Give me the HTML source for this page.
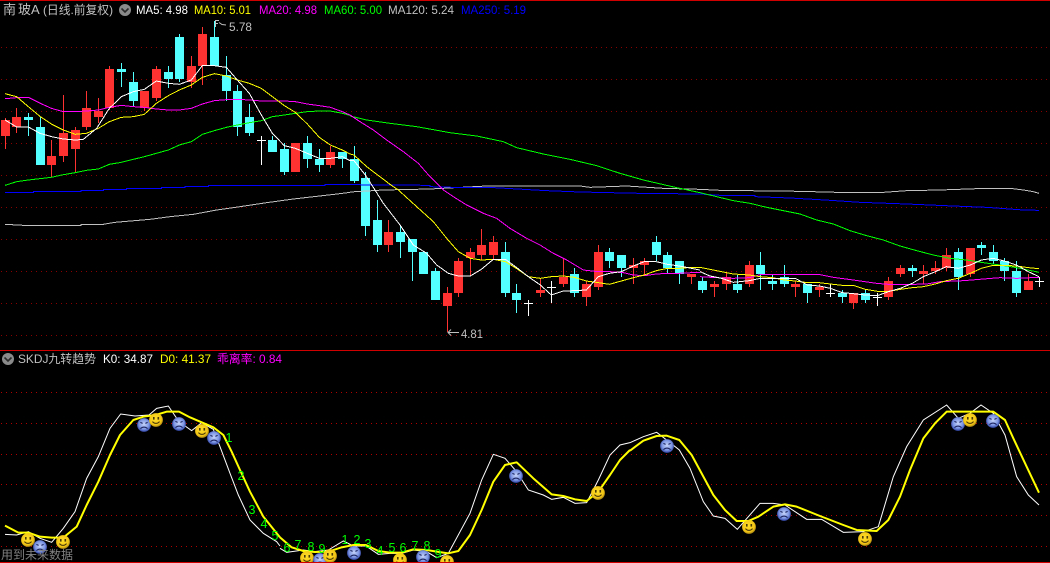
<!DOCTYPE html>
<html><head><meta charset="utf-8"><style>
html,body{margin:0;padding:0;background:#000;width:1050px;height:563px;overflow:hidden}
svg{display:block}
text{font-family:"Liberation Sans","Noto Sans CJK SC",sans-serif;font-size:12px}
.n{fill:#00ff00;font-size:12.5px}
</style></head><body>
<svg width="1050" height="563" viewBox="0 0 1050 563" xmlns="http://www.w3.org/2000/svg">
<defs>
<radialGradient id="gy" cx="45%" cy="40%" r="60%"><stop offset="0" stop-color="#ffe02a"/><stop offset=".75" stop-color="#f2c415"/><stop offset="1" stop-color="#a88412"/></radialGradient>
<radialGradient id="gb" cx="50%" cy="45%" r="55%"><stop offset="0" stop-color="#c4d2f8"/><stop offset=".65" stop-color="#7d96e4"/><stop offset="1" stop-color="#2c3f9e"/></radialGradient>
<symbol id="sm" viewBox="-7 -7 14 14" overflow="visible"><circle r="6.9" fill="url(#gy)"/><rect x="-3" y="-3" width="1.6" height="2.6" fill="#4a3a08"/><rect x="1.5" y="-3" width="1.6" height="2.6" fill="#4a3a08"/><path d="M-3.6 1.6Q0 5.2 3.6 1.6" fill="none" stroke="#4a3a08" stroke-width="1"/></symbol>
<symbol id="fr" viewBox="-7 -7 14 14" overflow="visible"><circle r="6.9" fill="url(#gb)"/><path d="M-3.6-2.6l2.2 1M3.6-2.6l-2.2 1" stroke="#1c2560" stroke-width="1.1" fill="none"/><path d="M-3.6 3.6Q0 .6 3.6 3.6" fill="none" stroke="#1c2560" stroke-width="1.1"/></symbol>
</defs>
<rect width="1050" height="563" fill="#000"/>

<!-- grid -->
<g stroke-width="1" stroke-dasharray="1 4" shape-rendering="crispEdges">
<path stroke="#8a0000" d="M1 47.5H1050M1 79.5H1050M1 111.5H1050M1 143.5H1050M1 175.5H1050M1 207.5H1050M1 239.5H1050M1 271.5H1050M1 303.5H1050M1 335.5H1050"/>
<path stroke="#b00000" d="M1 392.5H1050M1 423.5H1050M1 454.5H1050M1 484.5H1050M1 515.5H1050M1 546.5H1050"/>
</g>

<!-- red candles -->
<path shape-rendering="crispEdges" fill="#ff3232" d="M1 120h9V136h-9zM5 118h1V149h-1zM12 117h9V127h-9zM16 108h1V133h-1zM47 156h9V165h-9zM51 140h1V177h-1zM59 133h9V156h-9zM63 95h1V162h-1zM71 130h9V149h-9zM75 127h1V172h-1zM82 108h9V127h-9zM86 91h1V130h-1zM94 111h9V117h-9zM98 98h1V123h-1zM105 69h9V108h-9zM109 66h1V110h-1zM140 91h9V108h-9zM144 91h1V111h-1zM152 69h9V98h-9zM156 66h1V101h-1zM187 66h9V82h-9zM191 56h1V88h-1zM198 34h9V66h-9zM202 27h1V85h-1zM291 143h9V172h-9zM326 152h9V165h-9zM330 146h1V168h-1zM384 232h9V245h-9zM388 220h1V252h-1zM443 293h9V306h-9zM447 287h1V332h-1zM454 261h9V293h-9zM458 258h1V297h-1zM466 252h9V258h-9zM470 248h1V276h-1zM477 245h9V255h-9zM481 229h1V260h-1zM489 242h9V255h-9zM493 236h1V260h-1zM536 290h9V293h-9zM540 278h1V297h-1zM559 277h9V284h-9zM563 258h1V287h-1zM582 284h9V297h-9zM586 281h1V306h-1zM594 252h9V287h-9zM598 245h1V290h-1zM629 265h9V268h-9zM633 258h1V284h-1zM640 261h9V265h-9zM644 258h1V275h-1zM687 274h9V277h-9zM691 274h1V284h-1zM710 284h9V287h-9zM714 281h1V297h-1zM722 277h9V284h-9zM726 272h1V290h-1zM745 265h9V284h-9zM749 261h1V287h-1zM791 284h9V287h-9zM795 281h1V297h-1zM815 287h9V290h-9zM819 284h1V297h-1zM849 293h9V303h-9zM853 293h1V309h-1zM884 281h9V297h-9zM888 277h1V300h-1zM896 268h9V274h-9zM900 265h1V277h-1zM919 271h9V274h-9zM923 265h1V284h-1zM931 268h9V271h-9zM935 261h1V274h-1zM942 255h9V268h-9zM946 248h1V271h-1zM966 248h9V274h-9zM970 248h1V277h-1zM1024 281h9V290h-9zM1028 274h1V290h-1z"/>
<!-- cyan candles -->
<path shape-rendering="crispEdges" fill="#54ffff" d="M24 117h9V120h-9zM28 113h1V136h-1zM36 127h9V165h-9zM40 117h1V165h-1zM117 69h9V72h-9zM121 63h1V87h-1zM129 82h9V101h-9zM133 72h1V107h-1zM164 72h9V79h-9zM168 66h1V88h-1zM175 37h9V79h-9zM179 34h1V82h-1zM210 37h9V66h-9zM214 21h1V66h-1zM222 75h9V91h-9zM226 56h1V101h-1zM233 91h9V127h-9zM237 85h1V136h-1zM245 117h9V133h-9zM249 104h1V136h-1zM268 140h9V152h-9zM272 136h1V152h-1zM280 149h9V172h-9zM284 143h1V175h-1zM303 143h9V159h-9zM307 136h1V168h-1zM315 159h9V165h-9zM319 149h1V172h-1zM338 152h9V159h-9zM342 152h1V168h-1zM350 159h9V181h-9zM354 146h1V183h-1zM361 178h9V226h-9zM365 172h1V236h-1zM373 220h9V245h-9zM377 200h1V252h-1zM396 232h9V242h-9zM400 225h1V258h-1zM408 239h9V252h-9zM412 239h1V281h-1zM419 252h9V274h-9zM431 271h9V300h-9zM435 268h1V300h-1zM501 252h9V293h-9zM505 242h1V297h-1zM512 293h9V300h-9zM516 284h1V313h-1zM570 274h9V293h-9zM574 268h1V297h-1zM605 252h9V261h-9zM609 248h1V268h-1zM617 255h9V268h-9zM621 255h1V277h-1zM652 242h9V255h-9zM656 236h1V261h-1zM663 255h9V268h-9zM667 252h1V273h-1zM675 261h9V274h-9zM679 261h1V284h-1zM698 281h9V290h-9zM702 277h1V293h-1zM733 284h9V290h-9zM737 275h1V293h-1zM756 265h9V274h-9zM760 252h1V290h-1zM768 281h9V284h-9zM772 275h1V290h-1zM780 277h9V284h-9zM784 265h1V287h-1zM803 284h9V293h-9zM807 284h1V303h-1zM838 293h9V297h-9zM842 290h1V303h-1zM861 293h9V300h-9zM865 290h1V303h-1zM908 268h9V271h-9zM912 265h1V277h-1zM954 252h9V277h-9zM958 248h1V290h-1zM977 245h9V248h-9zM981 242h1V255h-1zM989 252h9V261h-9zM993 245h1V264h-1zM1000 261h9V271h-9zM1004 258h1V281h-1zM1012 271h9V293h-9zM1016 261h1V297h-1z"/>
<!-- doji -->
<path shape-rendering="crispEdges" fill="#fff" d="M257 140h9v1h-9zM261 136h1V165h-1zM524 303h9v1h-9zM528 300h1V316h-1zM547 287h9v1h-9zM551 281h1V303h-1zM826 293h9v1h-9zM830 284h1V297h-1zM873 297h9v1h-9zM877 293h1V306h-1zM1035 281h9v1h-9zM1039 277h1V287h-1z"/>

<!-- MA250 & MA120 -->
<g fill="none" stroke-width="1" shape-rendering="crispEdges" stroke-linejoin="miter">
<g stroke="#c0c0c0">
<polyline transform="translate(0,180) scale(.33333)" stroke-width="3" points="15,133 70,136 243,136 243,133 310,133 345,127 380,124 450,118 510,110 580,103 650,90 720,80 800,68 880,57 950,49 1020,41 1050,37"/>
<polyline transform="translate(350,180) scale(.33333)" stroke-width="3" points="0,36 100,30 240,27 410,18 690,18 720,22 830,18 940,25 1050,28"/>
<polyline transform="translate(700,180) scale(.33333)" stroke-width="3" points="0,28 60,31 300,34 410,37 550,37 620,32 720,30 830,26 930,25 970,30 1000,35 1017,40"/>
</g>
<g stroke="#0000ff">
<polyline transform="translate(0,180) scale(.33333)" stroke-width="3" points="15,37 100,37 100,34 243,34 243,31 310,31 310,28 380,28 380,25 485,25 485,22 555,22 555,19 625,19 625,16 975,16 975,13 1050,13"/>
<polyline transform="translate(350,180) scale(.33333)" stroke-width="3" points="0,14 240,16 240,20 310,22 415,22 520,28 590,32 690,36 870,40 1050,42"/>
<polyline transform="translate(700,180) scale(.33333)" stroke-width="3" points="0,42 60,46 165,47 165,50 270,54 375,60 480,67 620,72 760,78 860,82 970,90 1017,91"/>
</g>
<!-- MA60 -->
<g stroke="#00ff00">
<polyline transform="scale(.33333)" stroke-width="3" points="15,556 50,545 85,540 154,532 190,524 226,518 259,511 295,507 328,493 364,487 400,478 433,470 469,460 505,450 538,435 574,425 607,403 643,392 679,382 712,375 748,368 784,362 817,350 853,345 886,340 922,335 958,333 991,333 1027,340 1050,346"/>
<polyline transform="translate(350,0) scale(.33333)" stroke-width="3" points="0,348 50,360 120,370 200,380 300,398 380,408 460,425 500,443 580,462 660,478 740,497 810,520 880,540 980,563 1050,578"/>
<polyline transform="translate(700,180) scale(.33333)" stroke-width="3" points="0,38 50,50 100,62 150,70 200,82 250,92 300,102 350,120 400,132 450,152 500,167 550,180 600,198 650,212 700,225 750,235 800,240 850,248 900,255 950,263 1017,277"/>
</g>
<!-- MA20 -->
<g stroke="#ff00ff">
<polyline transform="scale(.33333)" stroke-width="3" points="15,296 50,293 85,292 121,310 154,325 190,335 226,335 259,333 295,330 328,322 364,316 400,320 433,322 469,327 505,330 538,330 574,325 607,312 643,302 679,299 712,298 748,300 784,303 817,303 853,303 886,305 922,312 958,317 991,322 1027,335 1050,345"/>
<polyline transform="translate(350,0) scale(.33333)" stroke-width="3" points="0,345 30,365 70,390 110,420 160,455 205,490 240,530 280,570"/>
<polyline transform="translate(350,180) scale(.33333)" stroke-width="3" points="280,30 310,50 350,75 400,100 440,115 480,145 530,175 570,195 610,220 650,240 700,270 745,275 780,275 820,278 850,285 883,287 919,282 952,280 988,280 1024,278 1050,278"/>
<polyline transform="translate(700,180) scale(.33333)" stroke-width="3" points="0,290 50,293 100,295 148,293 181,284 250,284 360,284 400,292 460,300 530,310 565,313 640,313 680,312 720,305 790,302 850,297 900,293 950,295 1017,292"/>
</g>
<!-- MA10 -->
<g stroke="#ffff00">
<polyline transform="scale(.33333)" stroke-width="3" points="15,281 50,290 85,320 121,350 154,372 190,390 226,403 259,400 295,385 328,365 364,352 400,350 433,343 469,310 505,287 538,270 574,255 607,232 643,221 679,228 712,240 748,250 784,265 817,290 853,317 886,337 922,372 958,412 991,435 1027,450 1050,462"/>
<polyline transform="translate(350,0) scale(.33333)" stroke-width="3" points="0,462 12,465 50,500 120,553 145,570"/>
<polyline transform="translate(350,180) scale(.33333)" stroke-width="3" points="145,30 200,80 250,125 290,175 325,215 361,235 394,240 430,238 466,245 499,265 535,290 571,295 604,290 640,288 673,292 709,303 745,308 778,313 814,303 850,293 883,285 919,272 952,265 988,265 1024,262 1050,262"/>
<polyline transform="translate(700,180) scale(.33333)" stroke-width="3" points="0,262 30,268 65,275 100,282 148,285 181,290 217,293 253,300 286,303 322,308 358,308 391,312 427,316 460,316 496,328 532,334 565,334 601,328 637,323 670,320 706,312 739,302 775,295 811,280 844,265 880,256 913,256 949,258 985,263 1017,266"/>
</g>
<!-- MA5 -->
<g stroke="#ffffff">
<polyline transform="scale(.33333)" stroke-width="3" points="15,360 50,381 85,381 120,400 155,410 190,417 226,420 250,418 290,385 328,325 364,290 400,275 433,268 469,243 505,250 538,253 574,240 607,197 643,197 679,202 712,240 748,280 784,345 817,400 853,437 886,445 922,460 958,475 991,475 1027,470 1050,482"/>
<polyline transform="translate(350,0) scale(.33333)" stroke-width="3" points="0,482 12,482 46,525 75,570"/>
<polyline transform="translate(350,180) scale(.33333)" stroke-width="3" points="75,30 100,70 150,135 190,195 230,220 260,255 295,280 325,288 361,288 394,268 430,238 466,238 499,262 535,290 571,315 604,345 640,333 673,332 709,330 745,290 778,280 814,275 850,258 883,245 919,245 952,253 988,258 1024,265 1050,270"/>
<polyline transform="translate(700,180) scale(.33333)" stroke-width="3" points="0,275 30,288 65,295 100,307 148,302 181,295 217,295 253,295 286,295 322,315 358,318 391,325 427,338 460,341 496,345 532,347 565,335 601,325 637,310 670,290 706,275 739,260 775,265 811,255 844,240 880,235 913,243 949,255 985,275 1017,290"/>
</g>
</g>

<!-- KDJ K line -->
<g fill="none" stroke="#ffffff" stroke-width="3">
<polyline transform="translate(0,340) scale(.33333)" points="15,583 50,585 85,575 120,595 155,607 190,565 225,515 260,415 295,350 330,265 362,222 405,228 447,225 470,205 505,198 537,245 575,272 605,248 640,268 660,320 690,400 715,465 750,540 790,580 830,605 840,618"/>
<polyline transform="translate(280,440) scale(.33333)" points="0,325 20,337 70,330 105,335 145,330 190,303 220,318 258,318 295,343 330,340 365,340 400,330 440,335 470,353 505,340 570,220 605,120 640,43 675,55 710,95 745,150 790,165 815,178 850,172 885,190 920,188 955,120 990,45 1020,15 1050,8"/>
<polyline transform="translate(630,390) scale(.33333)" points="0,158 40,140 80,127 110,150 148,180 180,235 220,335 250,378 285,385 322,418 390,340 430,340 465,345 530,388 575,388 640,427 700,425 745,410 790,260 830,170 880,90 950,45 985,85 1020,70 1053,45 1090,70 1125,135 1160,260 1195,315 1227,345"/>
</g>
<!-- KDJ D line -->
<g fill="none" stroke="#ffff00" stroke-width="6" stroke-linejoin="round">
<polyline transform="translate(0,340) scale(.33333)" points="15,557 55,578 85,578 120,590 155,593 190,593 230,560 260,495 295,425 330,345 360,285 400,240 430,230 467,225 500,215 537,215 570,232 605,247 640,262 670,285 695,335 720,390 750,455 790,530 840,592"/>
<polyline transform="translate(280,440) scale(.33333)" points="0,292 35,322 70,333 105,336 145,335 185,322 220,315 258,315 295,333 330,338 365,338 400,328 440,330 470,335 505,340 535,333 570,285 605,210 640,125 675,75 710,67 760,115 815,163 850,168 885,178 920,183 955,155 990,105 1020,60 1050,30"/>
<polyline transform="translate(630,390) scale(.33333)" points="0,182 40,152 80,138 110,137 148,150 185,195 250,315 285,360 320,393 355,393 385,380 430,350 465,343 500,350 570,378 640,405 680,420 740,423 775,390 810,320 840,240 880,145 915,100 950,65 1090,65 1125,90 1150,145 1190,230 1227,308"/>
</g>

<!-- green numbers -->
<g text-anchor="middle">
<text class="n" x="229" y="442">1</text><text class="n" x="241" y="480">2</text><text class="n" x="252" y="514">3</text><text class="n" x="264" y="528">4</text><text class="n" x="275" y="540">5</text><text class="n" x="287" y="552">6</text><text class="n" x="298" y="549">7</text><text class="n" x="311" y="551">8</text><text class="n" x="322" y="553">9</text>
<text class="n" x="345" y="544">1</text><text class="n" x="357" y="544">2</text><text class="n" x="368" y="548">3</text><text class="n" x="380" y="555">4</text><text class="n" x="392" y="552">5</text><text class="n" x="403" y="552">6</text><text class="n" x="415" y="550">7</text><text class="n" x="427" y="550">8</text><text class="n" x="438" y="558">9</text>
</g>

<!-- smileys -->
<use href="#sm" x="21" y="533" width="14" height="14"/>
<use href="#fr" x="33" y="540" width="14" height="14"/>
<use href="#sm" x="56" y="535" width="14" height="14"/>
<use href="#fr" x="137" y="418" width="14" height="14"/>
<use href="#sm" x="149" y="413" width="14" height="14"/>
<use href="#fr" x="172" y="417" width="14" height="14"/>
<use href="#sm" x="195" y="424" width="14" height="14"/>
<use href="#fr" x="207" y="431" width="14" height="14"/>
<use href="#sm" x="300" y="551" width="14" height="14"/>
<use href="#fr" x="313" y="553" width="14" height="14"/>
<use href="#sm" x="323" y="549" width="14" height="14"/>
<use href="#fr" x="347" y="546" width="14" height="14"/>
<use href="#sm" x="393" y="553" width="14" height="14"/>
<use href="#fr" x="416" y="550" width="14" height="14"/>
<use href="#sm" x="440" y="555" width="14" height="14"/>
<use href="#fr" x="509" y="469" width="14" height="14"/>
<use href="#sm" x="591" y="486" width="14" height="14"/>
<use href="#fr" x="660" y="439" width="14" height="14"/>
<use href="#sm" x="742" y="520" width="14" height="14"/>
<use href="#fr" x="777" y="507" width="14" height="14"/>
<use href="#sm" x="858" y="532" width="14" height="14"/>
<use href="#fr" x="951" y="417" width="14" height="14"/>
<use href="#sm" x="963" y="413" width="14" height="14"/>
<use href="#fr" x="986" y="414" width="14" height="14"/>

<!-- hi/lo labels -->
<g fill="none" stroke="#c0c0c0" stroke-width="1">
<path d="M215.5 27V20.5H219M215.5 23.5H218M219 22.5L222 24.5L226 25"/>
<path d="M448 332.5H459M451 329.5L448 332.5L451 335.5"/>
</g>
<text x="229" y="31" fill="#c0c0c0" textLength="23" lengthAdjust="spacingAndGlyphs">5.78</text>
<text x="461" y="338" fill="#c0c0c0" textLength="22" lengthAdjust="spacingAndGlyphs">4.81</text>

<!-- header -->
<text x="3" y="14" fill="#c0c0c0" style="font-size:13px">南</text>
<text x="18" y="14" fill="#c0c0c0" style="font-size:13px">玻A</text>
<text x="43" y="14" fill="#c0c0c0" textLength="70" lengthAdjust="spacingAndGlyphs">(日线.前复权)</text>
<circle cx="125" cy="10" r="6" fill="#8a8a8a"/><path d="M121.5 8.5L125 12L128.5 8.5" fill="none" stroke="#2a2a2a" stroke-width="1.6"/>
<text x="136" y="14" fill="#ffffff" textLength="52" lengthAdjust="spacingAndGlyphs">MA5: 4.98</text>
<text x="194" y="14" fill="#ffff00" textLength="57" lengthAdjust="spacingAndGlyphs">MA10: 5.01</text>
<text x="259" y="14" fill="#ff00ff" textLength="58" lengthAdjust="spacingAndGlyphs">MA20: 4.98</text>
<text x="324" y="14" fill="#00ff00" textLength="58" lengthAdjust="spacingAndGlyphs">MA60: 5.00</text>
<text x="388" y="14" fill="#c0c0c0" textLength="66" lengthAdjust="spacingAndGlyphs">MA120: 5.24</text>
<text x="461" y="14" fill="#0000ff" textLength="65" lengthAdjust="spacingAndGlyphs">MA250: 5.19</text>

<!-- lower header -->
<circle cx="8" cy="359" r="6" fill="#8a8a8a"/><path d="M4.5 357.5L8 361L11.5 357.5" fill="none" stroke="#2a2a2a" stroke-width="1.6"/>
<text x="18" y="363" fill="#c0c0c0" textLength="78" lengthAdjust="spacingAndGlyphs">SKDJ九转趋势</text>
<text x="103" y="363" fill="#ffffff" textLength="50" lengthAdjust="spacingAndGlyphs">K0: 34.87</text>
<text x="160" y="363" fill="#ffff00" textLength="51" lengthAdjust="spacingAndGlyphs">D0: 41.37</text>
<text x="217" y="363" fill="#ff00ff" textLength="65" lengthAdjust="spacingAndGlyphs">乖离率: 0.84</text>
<text x="1" y="559" fill="#808080" textLength="72" lengthAdjust="spacingAndGlyphs">用到未来数据</text>

<!-- borders -->
<g shape-rendering="crispEdges" fill="#d00000">
<rect x="0" y="0" width="1050" height="1"/>
<rect x="0" y="350" width="1050" height="1"/>
<rect x="0" y="562" width="1050" height="1"/>
</g>
</svg>
</body></html>
